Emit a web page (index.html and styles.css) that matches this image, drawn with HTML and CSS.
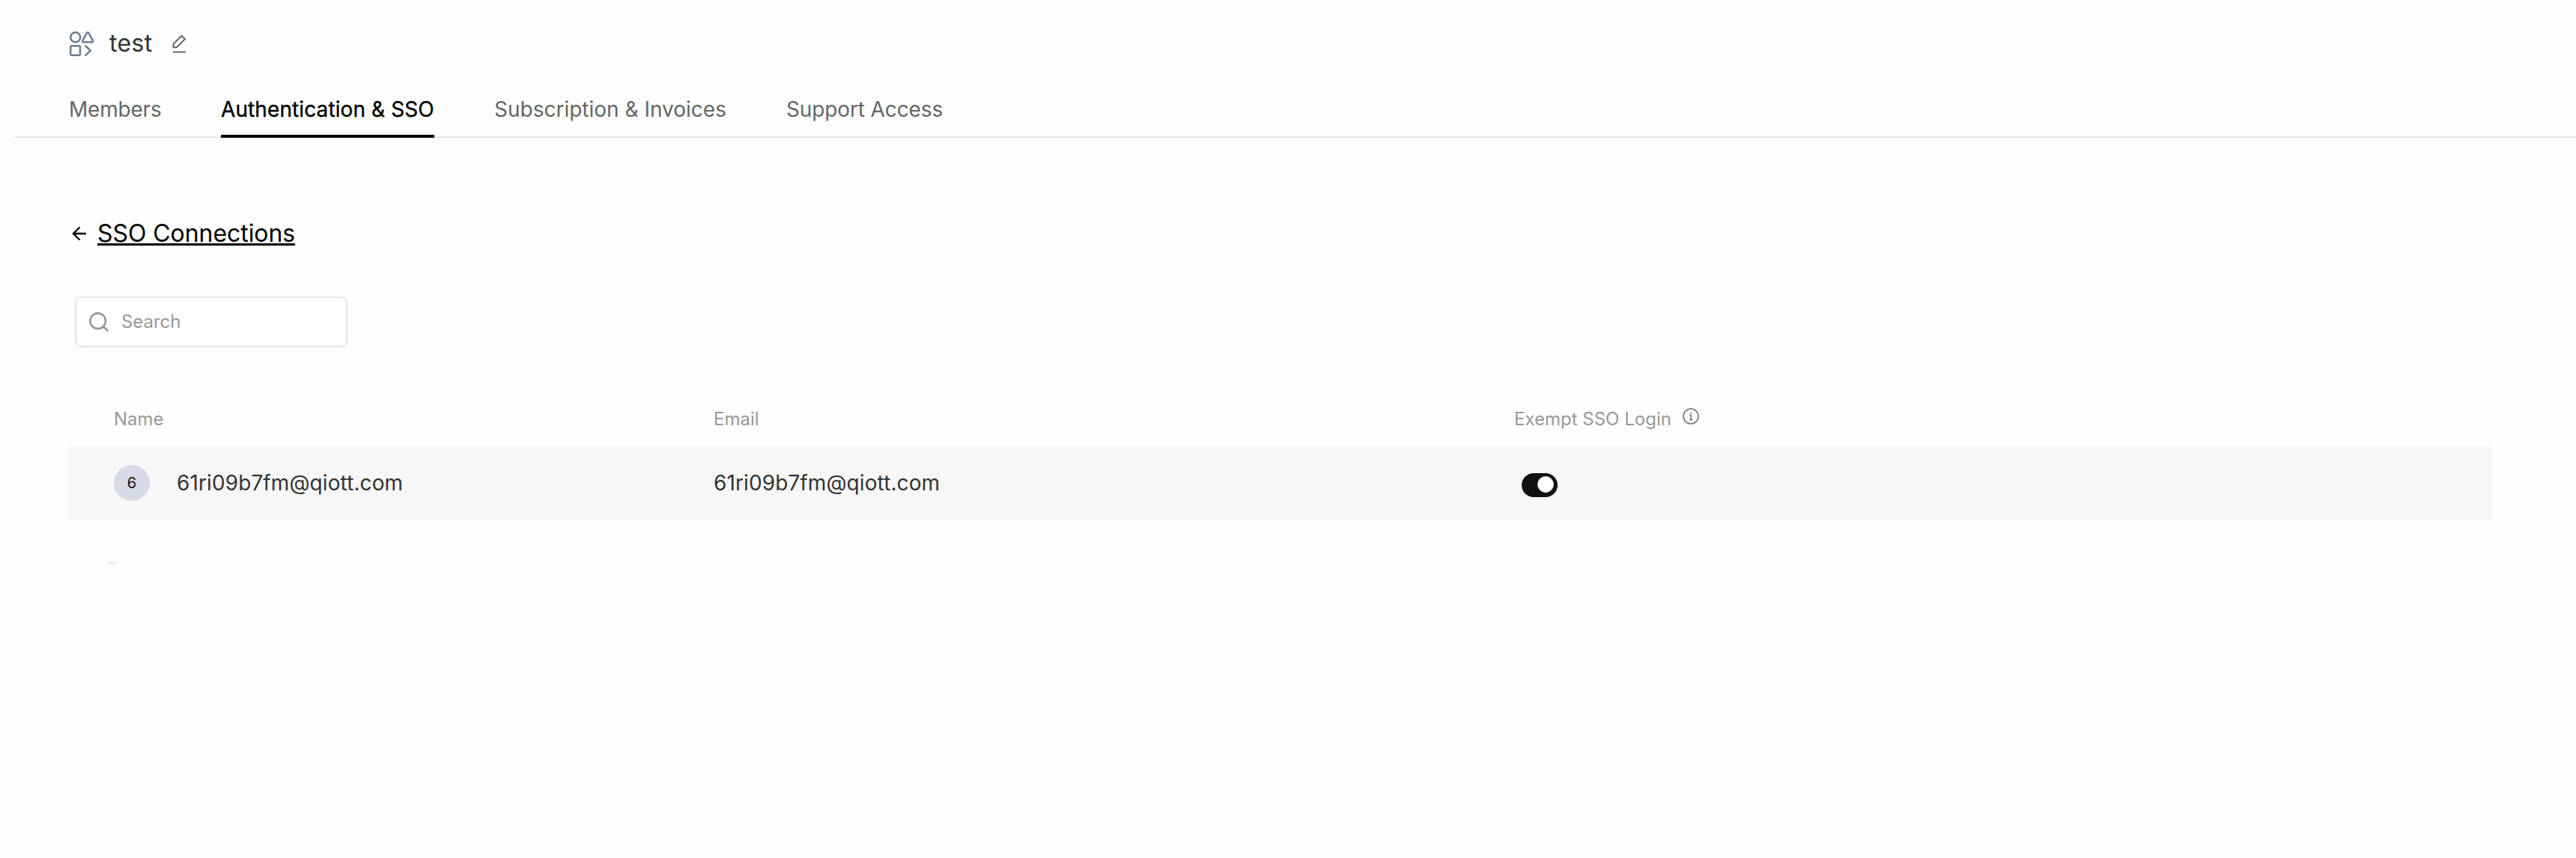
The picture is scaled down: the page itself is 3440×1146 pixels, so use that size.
FILE: index.html
```
<!DOCTYPE html>
<html lang="en">
<head>
<meta charset="utf-8">
<title>test</title>
<link rel="stylesheet" href="styles.css">
</head>
<body>
<header class="header">
  <div class="workspace">
    <svg class="workspace-icon" width="36" height="36" viewBox="0 0 36 36"><circle cx="8.7" cy="9.7" r="6.5"/><path d="M24.1 3.8 18.3 14.2a1.3 1.3 0 0 0 1.1 2h11.5a1.3 1.3 0 0 0 1.1-2L26.2 3.8a1.2 1.2 0 0 0-2.1 0Z"/><rect x="2.2" y="21.2" width="12.8" height="12.6" rx="1.5"/><path d="M22.5 21.5l6.3 6.1-6.3 6.1"/></svg>
    <h1 class="workspace-name">test</h1>
    <svg class="edit-icon" width="20" height="26" viewBox="0 0 20 26"><path d="M13.5 2.7 18 7.2 7 18.3H2.5v-4.5Z"/><path d="M2 24.5h17"/></svg>
  </div>
  <nav class="tabs">
    <a class="tab">Members</a>
    <a class="tab active">Authentication &amp; SSO</a>
    <a class="tab">Subscription &amp; Invoices</a>
    <a class="tab">Support Access</a>
  </nav>
</header>
<main class="content">
  <a class="back">
    <svg class="back-icon" width="20" height="20" viewBox="0 0 20 20"><path d="M19 10H2M10.5 1.5 2 10l8.5 8.5"/></svg>
    <span class="back-label">SSO Connections</span>
  </a>
  <div class="search">
    <svg class="search-icon" width="26" height="26" viewBox="0 0 26 26"><circle cx="11.7" cy="11.7" r="10.3"/><path d="M19 19l5.5 5.5"/></svg>
    <span>Search</span>
  </div>
  <section class="table">
    <div class="row head">
      <span>Name</span>
      <span>Email</span>
      <span class="exempt">Exempt SSO Login
        <svg class="info-icon" width="22" height="22" viewBox="0 0 22 22"><circle cx="11" cy="11" r="10"/><path d="M9 9.5h2.2v6M9 15.5h4.2M10 6.5h2"/></svg>
      </span>
    </div>
    <div class="row member">
      <span class="member-name"><span class="avatar">6</span>61ri09b7fm@qiott.com</span>
      <span>61ri09b7fm@qiott.com</span>
      <span class="toggle"><span class="knob"></span></span>
    </div>
  </section>
  <div class="handle"></div>
</main>
</body>
</html>
```
FILE: styles.css
```
* { box-sizing: border-box; }
body { margin: 0; min-height: 1146px; background: #fefefe; color: #333; font: 400 28px/40px Inter, "Liberation Sans", sans-serif; }
svg { display: block; fill: none; stroke-width: 2; stroke-linecap: round; stroke-linejoin: round; flex: none; }
.header { height: 184px; margin-left: 20px; padding: 38px 0 0 71px; border-bottom: 2px solid #e8e8e8; }
.workspace { display: flex; align-items: center; height: 40px; }
.workspace-icon { stroke: #717a91; stroke-width: 2.5; margin-left: 1px; }
.workspace-name { margin: 0 0 0 18px; font-size: 32px; font-weight: 400; line-height: 40px; letter-spacing: .35px; color: #333; }
.edit-icon { margin: 0 0 0 25px; stroke: #666; stroke-linecap: butt; stroke-linejoin: miter; }
.tabs { display: flex; gap: 80px; margin: 48px 0 0 1px; }
.tab { height: 58px; color: #666; }
.tab:first-child { width: 123px; letter-spacing: -.2px; }
.tab:last-child { letter-spacing: -.12px; }
.tab.active { width: 285px; color: #000; border-bottom: 4px solid #000; white-space: nowrap; letter-spacing: .1px; -webkit-text-stroke: .35px #000; }
.content { padding: 106px 112px 0 92px; }
.back { display: flex; align-items: center; height: 44px; padding-left: 4px; color: #000; font-size: 32px; line-height: 44px; }
.back-icon { stroke: #000; stroke-width: 2.4; stroke-linecap: butt; stroke-linejoin: miter; }
.back-label { margin-left: 14px; letter-spacing: -.06px; text-decoration: underline; text-decoration-thickness: 3px; text-underline-offset: 2px; text-decoration-skip-ink: none; }
.search { display: flex; align-items: center; gap: 17px; width: 364px; height: 68px; margin: 62px 0 0 8px; padding: 0 0 0 17px; border: 2px solid #e5e5eb; border-radius: 8px; background: #fff; color: #999; font-size: 24px; letter-spacing: -.05px; }
.search-icon { stroke: #999; stroke-width: 2.6; }
.table { margin-top: 68px; }
.row { display: grid; grid-template-columns: 801px 1069px 1fr; align-items: center; padding-left: 60px; }
.head { height: 64px; padding-bottom: 8px; font-size: 24px; color: #999; }
.exempt { display: flex; align-items: center; gap: 15px; }
.info-icon { stroke: #8c8c8c; margin-top: -8px; stroke-linecap: butt; }
.member { height: 98px; background: #f7f7f7; letter-spacing: .1px; }
.member-name { display: flex; align-items: center; gap: 36px; }
.avatar { width: 48px; height: 48px; border-radius: 50%; background: #d8dae5; color: #111; font-size: 20px; line-height: 48px; text-align: center; }
.toggle { display: flex; justify-content: flex-end; width: 48px; height: 32px; margin: 5px 0 0 10px; padding: 4px 5px; border-radius: 16px; background: #111; }
.knob { width: 22px; height: 22px; border-radius: 50%; border: 1px solid #dddde6; background: #fff; }
.handle { width: 12px; height: 4px; margin: 56px 0 0 50px; border-radius: 2px; background: #efefef; }
```
